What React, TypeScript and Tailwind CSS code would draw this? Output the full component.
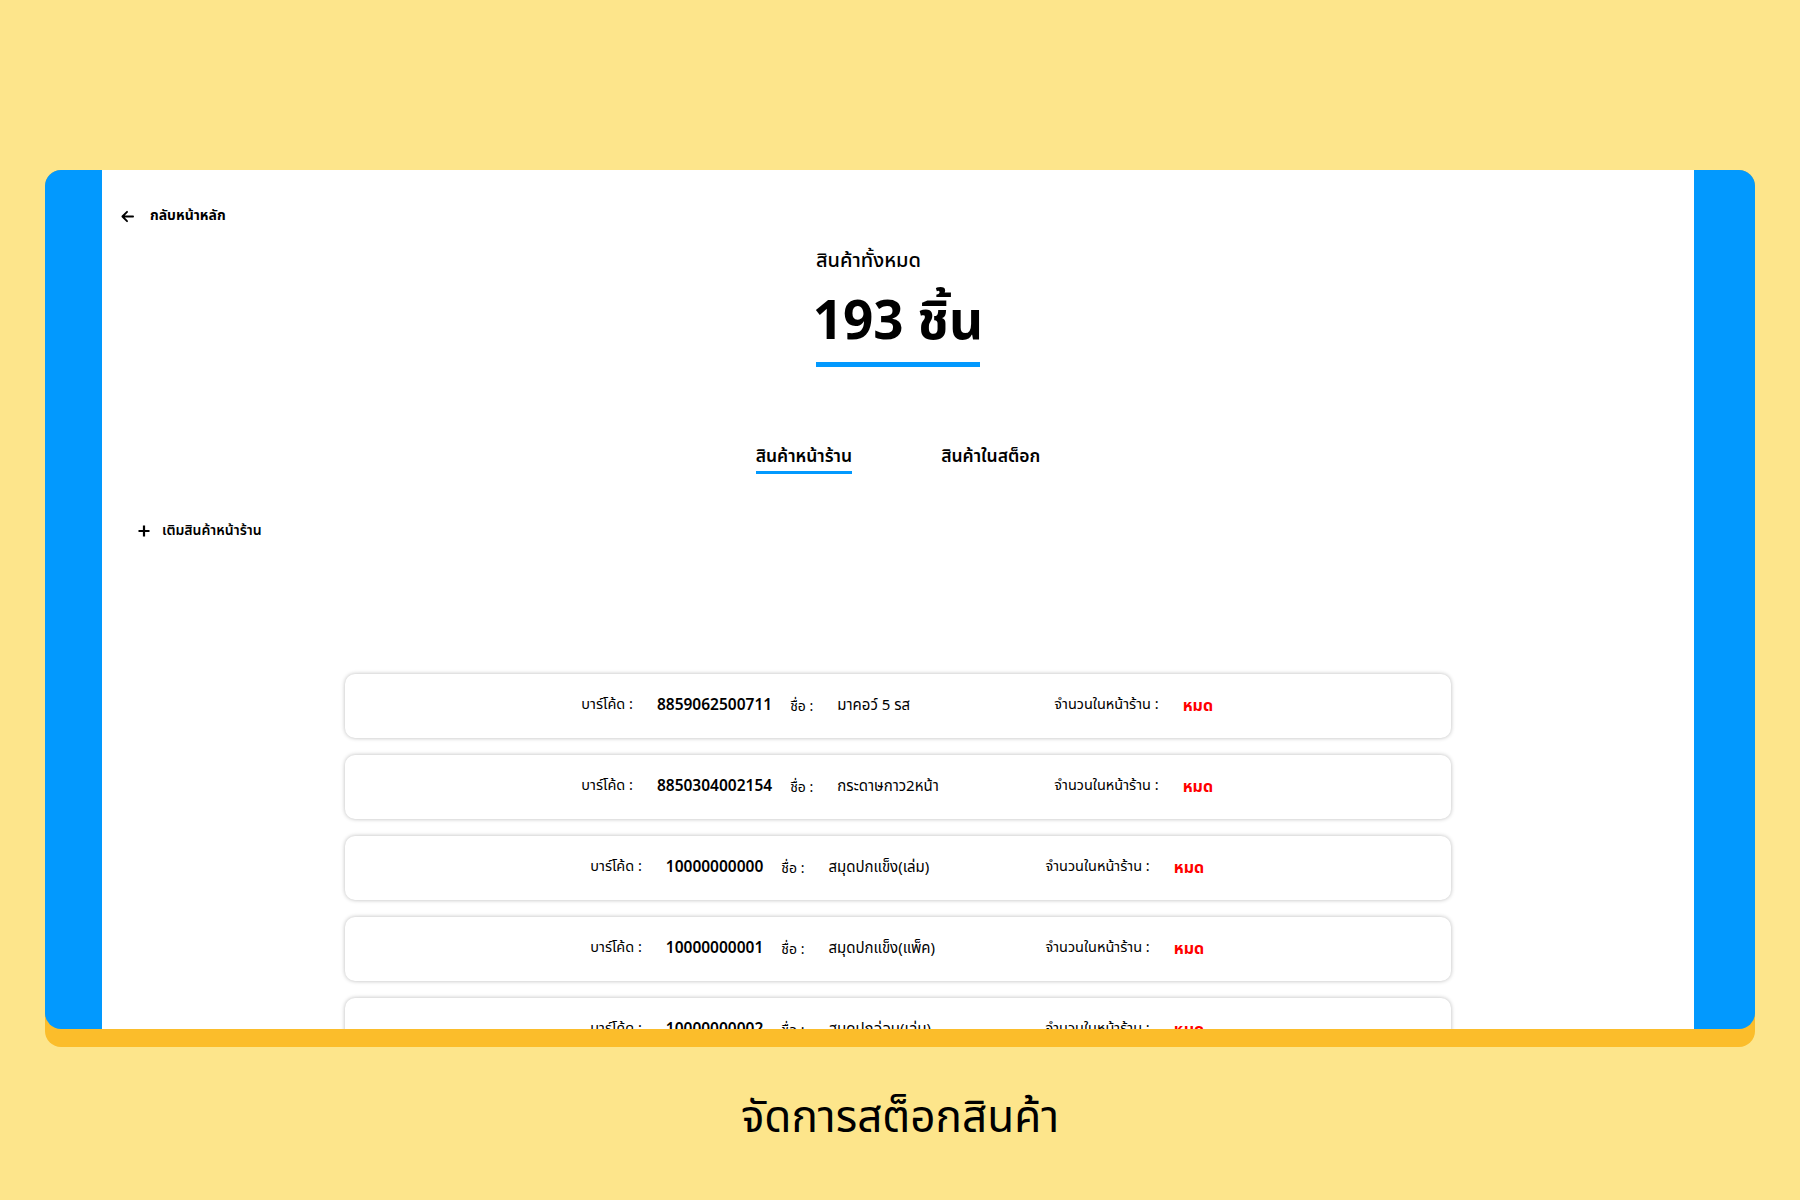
import React from "react";

const rows = [
  { code: "8859062500711", name: "มาคอว์ 5 รส" },
  { code: "8850304002154", name: "กระดาษกาว2หน้า" },
  { code: "10000000000", name: "สมุดปกแข็ง(เล่ม)" },
  { code: "10000000001", name: "สมุดปกแข็ง(แพ็ค)" },
  { code: "10000000002", name: "สมุดปกอ่อน(เล่ม)" },
];

export default function App() {
  return (
    <div
      className="w-[1800px] h-[1200px] bg-[#fde58b] flex flex-col items-center overflow-hidden"
      style={{ fontFamily: '"Noto Sans Thai", "Noto Sans", "Liberation Sans", sans-serif' }}
    >
      <div className="mt-[170px] w-[1710px] bg-[#fbbd2b] rounded-[16px] pb-[18px]">
        <div className="h-[859px] bg-[#0299fe] rounded-[16px] pl-[57px] pr-[61px] flex">
          <div className="flex-1 bg-white overflow-hidden flex flex-col">
            <div className="flex items-center gap-[16px] pl-[19px] pt-[36px] text-[14px] font-bold text-black leading-[20px]">
              <svg width="13" height="13" viewBox="0 0 14 14" fill="none" stroke="black" strokeWidth="2" strokeLinecap="round" strokeLinejoin="round">
                <path d="M13 7H1.5M6.5 2L1.5 7l5 5" />
              </svg>
              <span>กลับหน้าหลัก</span>
            </div>
            <div className="flex flex-col items-center mt-[21px]">
              <div className="text-[20px] font-medium leading-[28px] text-black self-center w-[164px]">สินค้าทั้งหมด</div>
              <div className="text-[53px] font-bold leading-[64px] text-black mt-[16px]">193 ชิ้น</div>
              <div className="w-[164px] h-[5px] bg-[#0299fe] mt-[7px]" />
            </div>
            <div className="flex justify-center gap-[89px] mt-[78px]">
              <div className="flex flex-col items-center">
                <span className="text-[17.5px] font-semibold leading-[24px] text-black">สินค้าหน้าร้าน</span>
                <div className="w-full h-[3px] bg-[#0299fe] mt-[2px]" />
              </div>
              <div className="flex flex-col items-center">
                <span className="text-[17.5px] font-semibold leading-[24px] text-black">สินค้าในสต็อก</span>
              </div>
            </div>
            <div className="flex items-center gap-[12px] pl-[36px] mt-[47px] text-[14px] font-semibold text-black leading-[20px]">
              <svg width="12" height="12" viewBox="0 0 12 12" stroke="black" strokeWidth="2.2">
                <path d="M6 0.5v11M0.5 6h11" />
              </svg>
              <span>เติมสินค้าหน้าร้าน</span>
            </div>
            <div className="flex flex-col items-center gap-[17px] mt-[133px]">
              {rows.map((r) => (
                <div
                  key={r.code}
                  className="w-[1106px] h-[64px] shrink-0 rounded-[10px] bg-white shadow-[0_0_4px_rgba(0,0,0,0.28)] flex items-center justify-center text-black"
                >
                  <span className="text-[14.5px] mr-[24px]">บาร์โค้ด :</span>
                  <span className="text-[15.5px] font-semibold mr-[18px]">{r.code}</span>
                  <span className="text-[14px] mr-[24px]">ชื่อ :</span>
                  <span className="text-[15px] w-[217px]">{r.name}</span>
                  <span className="text-[14.5px] mr-[24px]">จำนวนในหน้าร้าน :</span>
                  <span className="text-[16px] font-bold text-[#ff0000] w-[32px]">หมด</span>
                </div>
              ))}
            </div>
          </div>
        </div>
      </div>
      <div className="mt-[44px] text-[44px] leading-[56px] text-black">จัดการสต็อกสินค้า</div>
    </div>
  );
}
